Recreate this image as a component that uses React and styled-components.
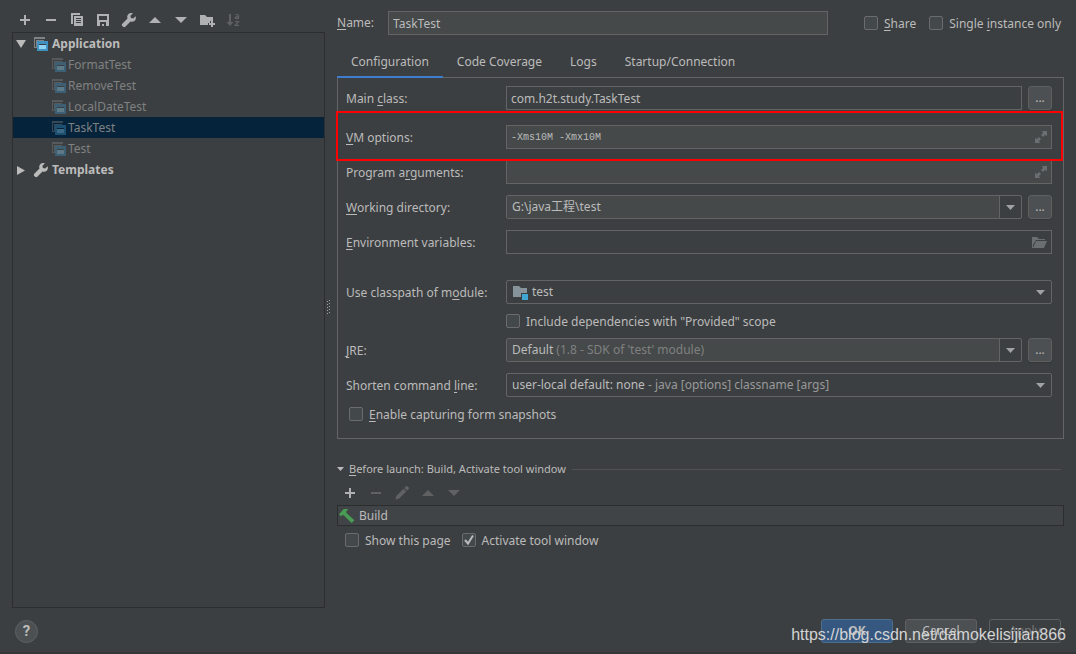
import { useState } from 'react'
import styled, { createGlobalStyle, css } from 'styled-components'

const GlobalStyle = createGlobalStyle`
  *, *::before, *::after {
    box-sizing: border-box;
  }
  body {
    margin: 0;
    background: #3c3f41;
    color: #bbbbbb;
    font-family: 'Noto Sans', 'Noto Sans CJK SC', sans-serif;
    font-size: 12px;
    line-height: 20px;
  }
  button, input, select {
    margin: 0;
    padding: 0;
    color: inherit;
    font: inherit;
  }
  u {
    text-underline-offset: 2px;
    text-decoration-thickness: 1px;
    text-decoration-skip-ink: none;
  }
`

const Dialog = styled.div`
  position: relative;
  display: flex;
  flex-direction: column;
  min-height: 100vh;
  border-bottom: 2px solid #343638;
`

const Body = styled.main`
  flex: 1;
  display: flex;
  padding: 0 12px;
`

const Sidebar = styled.aside`
  flex: none;
  width: 313px;
  display: flex;
  flex-direction: column;
`

const Toolbar = styled.div`
  display: flex;
  gap: 10px;
  padding: ${p => p.$pad};
`

const IconButton = styled.button`
  display: flex;
  width: 16px;
  height: 16px;
  border: 0;
  background: none;
  color: #afb1b3;
  &:disabled {
    color: #5f6163;
  }
`

const Tree = styled.ul`
  flex: 1;
  margin: 0;
  padding: 0;
  border: 1px solid #2b2d2e;
  list-style: none;
`

const TreeItem = styled.li`
  display: flex;
  align-items: center;
  height: 21px;
  padding-left: ${p => (p.$child ? '38px' : '2px')};
  color: ${p => (p.$child ? '#7f8182' : '#bbbbbb')};
  font-weight: ${p => (p.$child ? 'normal' : 'bold')};
  background: ${p => (p.$selected ? '#05233b' : 'transparent')};
  white-space: pre;
  & > svg:last-of-type {
    opacity: ${p => (p.$child ? 0.4 : 1)};
    margin-right: ${p => (p.$child ? '1px' : '3px')};
  }
  & > svg:first-of-type:not(:last-of-type) {
    margin-right: 2px;
  }
`

const Splitter = styled.div`
  flex: none;
  width: 12px;
  display: flex;
  align-items: center;
  padding: 8px 0 0 1px;
`

const Content = styled.section`
  flex: 1;
  min-width: 0;
  padding-top: 11px;
`

const NameRow = styled.div`
  display: flex;
  align-items: center;
  padding-right: 3px;
  white-space: nowrap;
  & > label:first-child {
    width: 51px;
  }
  & > input {
    flex: 1;
    min-width: 0;
    margin-right: 36px;
  }
`

const Field = styled.input`
  width: 100%;
  height: 24px;
  padding: 0 4px;
  border: 1px solid #646464;
  border-radius: 0;
  background: ${p => (p.$plain ? 'transparent' : '#45494a')};
  outline: none;
  ${p =>
    p.$mono &&
    css`
      font-family: 'Liberation Mono', monospace;
      font-size: 10px;
    `}
`

const CheckLabel = styled.label`
  display: inline-flex;
  align-items: center;
  gap: 6px;
  height: 24px;
  margin-left: ${p => p.$indent || '0'};
  margin-right: ${p => p.$space || '0'};
  white-space: nowrap;
  & > span:last-child {
    padding-top: 2px;
  }
`

const CheckBox = styled.span`
  display: grid;
  width: 14px;
  height: 14px;
  & > * {
    grid-area: 1 / 1;
  }
  & > svg {
    pointer-events: none;
  }
`

const CheckInput = styled.input`
  appearance: none;
  width: 14px;
  height: 14px;
  border: 1px solid #6b6b6b;
  border-radius: 2px;
  background: #43494a;
`

const Tabs = styled.div`
  position: relative;
  display: flex;
  height: 33px;
  margin: 10px 0 -1px;
`

const Tab = styled.button`
  padding: 2px 14px 0;
  border: 0;
  border-bottom: 2px solid ${p => (p.$active ? '#3d7dcc' : 'transparent')};
  background: none;
`

const Panel = styled.div`
  padding: 8px 11px 12px 8px;
  border: 1px solid #646464;
`

const Row = styled.div`
  position: relative;
  display: grid;
  grid-template-columns: 160px 1fr auto;
  align-items: center;
  margin-top: ${p => p.$space || '11px'};
  white-space: nowrap;
  & > label[for] {
    padding-top: 2px;
  }
`

const Highlight = styled.div`
  position: absolute;
  inset: -14px -11px -12px -10px;
  border: 2px solid #ff0000;
  pointer-events: none;
  z-index: 1;
`

const Control = styled.div`
  display: grid;
  grid-template-columns: 1fr auto;
  align-items: center;
  & > input {
    grid-area: 1 / 1 / 2 / 3;
  }
  & > button {
    grid-area: 1 / 2;
    margin-right: 4px;
    color: #6b6e70;
  }
`

const Combo = styled.div`
  display: grid;
  grid-template-columns: 1fr 22px;
  height: 24px;
  border: 1px solid #646464;
  border-radius: 2px;
  overflow: hidden;
  & > select {
    grid-area: 1 / 1 / 2 / 3;
    appearance: none;
    border: 0;
    background: transparent;
    color: transparent;
    outline: none;
  }
  & > select option {
    background: #3c3f41;
    color: #bbbbbb;
  }
`

const ComboValue = styled.div`
  grid-area: 1 / 1;
  display: flex;
  align-items: center;
  padding-left: 5px;
  background: ${p => (p.$editable ? '#45494a' : 'transparent')};
  pointer-events: none;
  white-space: pre;
  line-height: 22px;
  & > svg {
    margin-right: 4px;
  }
`

const Hint = styled.span`
  color: ${p => (p.$dim ? '#808080' : '#999999')};
`

const ComboArrow = styled.div`
  grid-area: 1 / 2;
  display: grid;
  place-items: center;
  border-left: 1px solid ${p => (p.$editable ? '#646464' : 'transparent')};
  color: #a0a2a4;
  pointer-events: none;
`

const MoreButton = styled.button`
  width: 24px;
  height: 24px;
  margin-left: 6px;
  border: 1px solid #5e6060;
  border-radius: 3px;
  background: #4c5052;
  box-shadow: 0 1px 1px #353739;
  line-height: 20px;
`

const LaunchTitle = styled.h2`
  display: flex;
  align-items: center;
  gap: 4px;
  height: 20px;
  margin: 20px 0 0;
  padding-right: 3px;
  font-size: 11px;
  font-weight: normal;
  white-space: nowrap;
  &::after {
    content: '';
    flex: 1;
    height: 1px;
    margin-left: 2px;
    background: #515151;
  }
`

const TaskList = styled.ul`
  margin: 0 0 2px;
  padding: 0;
  border: 1px solid #2b2d2e;
  background: #414446;
  list-style: none;
`

const Task = styled.li`
  display: flex;
  align-items: center;
  gap: 4px;
  height: 19px;
  padding-left: 1px;
`

const LaunchChecks = styled.div`
  padding-left: 8px;
`

const Footer = styled.footer`
  flex: none;
  display: flex;
  align-items: center;
  gap: 12px;
  height: 44px;
  padding: 2px 15px 0;
`

const HelpButton = styled.button`
  width: 23px;
  height: 23px;
  margin-right: auto;
  border: 1px solid #5e6264;
  border-radius: 50%;
  background: #4c5052;
  font-family: Roboto, sans-serif;
  font-size: 15px;
  font-weight: bold;
  line-height: 20px;
`

const DialogButton = styled.button`
  width: 72px;
  height: 24px;
  border: 1px solid #5e6060;
  border-radius: 3px;
  background: #4c5052;
  line-height: 20px;
  ${p =>
    p.$primary &&
    css`
      border-color: #4c708c;
      background: #365880;
      font-weight: bold;
    `}
  &:disabled {
    background: transparent;
    color: #777777;
  }
`

const Watermark = styled.div`
  position: absolute;
  right: 10px;
  bottom: 7px;
  color: #d3d4d4;
  font-family: 'Liberation Sans', Arial, sans-serif;
  font-size: 16px;
  line-height: 20px;
  pointer-events: none;
`

const IconSvg = styled.svg`
  flex: none;
`

const Svg = ({ size = 16, children }) => (
  <IconSvg
    width={size}
    height={size}
    viewBox={`0 0 ${size} ${size}`}
    fill="currentColor"
    aria-hidden="true"
  >
    {children}
  </IconSvg>
)

const icons = {
  add: <path d="M7 3h2v4h4v2H9v4H7V9H3V7h4z" />,
  remove: <path d="M3 7h10v2H3z" />,
  copy: (
    <>
      <path d="M2 1h9v2H4v9H2z" />
      <path d="M5 4h9v10H5zM7 6v1h5V6zM7 8v1h5V8zM7 10v1h5v-1z" fillRule="evenodd" />
    </>
  ),
  save: (
    <path d="M2 2h12v12H2zM4 4v4h8V4zM5 10v4h2v-2h2v2h2v-4z" fillRule="evenodd" />
  ),
  wrench: (
    <path d="M14.6 4.2 12.2 6.6 9.9 6.1 9.4 3.8 11.8 1.4C10.2.8 8.4 1.1 7.3 2.3 6.2 3.4 5.9 5.1 6.5 6.5L1.3 11.7C.7 12.3.7 13.3 1.3 13.9L2.1 14.7C2.7 15.3 3.7 15.3 4.3 14.7L9.5 9.5C10.9 10.1 12.6 9.8 13.7 8.7 14.9 7.5 15.2 5.7 14.6 4.2Z" />
  ),
  up: <path d="M8 5 14 11H2z" />,
  down: <path d="M2 5h12L8 11z" />,
  folder: (
    <path d="M1 3h5l2 2h6v4h-3v2H9v2H1zM12 9h2v2h2v2h-2v2h-2v-2h-2v-2h2z" />
  ),
  sort: (
    <>
      <path d="M4 2h2v8h2.5L5 14 1.5 10H4z" />
      <path
        d="M10.5 3.2c.8-1 3-1 3 .6V7M13.5 4.7c-3-.2-3.4.6-3.2 1.3.3 1 2.5 1 3.2-.4M10 9.5h3.5L10.2 13.3H14"
        fill="none"
        stroke="currentColor"
        strokeWidth="1.2"
      />
    </>
  ),
  edit: (
    <path d="M1.5 14.5 2.3 11 9.5 3.8 12.2 6.5 5 13.7zM10.3 3 12 1.3c.4-.4 1-.4 1.4 0l1.3 1.3c.4.4.4 1 0 1.4L13 5.7z" />
  ),
  expand: (
    <path d="M10 2h5v5l-2-1-2 2-2-2 2-2zM3 9v5h5l-1-2 2-2-2-2-2 2z" />
  ),
  open: <path d="M0 3h5l2 2h6v1H4L1 11v3H0zM4 7h11l-3 7H1z" />,
}

const Icon = ({ name }) => <Svg>{icons[name]}</Svg>

const AppIcon = () => (
  <Svg>
    <path d="M1 1h11v2H1zM1 3h1v8H1zM1 11h3v1H1zM3 4h8v1H4v6H3z" fill="#7f8385" />
    <path d="M4 5h11v10H4zM6 8v5h7V8z" fill="#3f91c1" fillRule="evenodd" />
    <path d="M6 9h7v4H6z" fill="#8fd3f5" />
  </Svg>
)

const ModuleIcon = () => (
  <Svg>
    <path d="M1 2h6l2 2h6v5H9v4H1z" fill="#87939a" />
    <path d="M10 10h6v6h-6z" fill="#40a7d4" />
  </Svg>
)

const HammerIcon = () => (
  <Svg>
    <path
      d="M0 6.3 4.8 1h4.4L7.2 3.7 7.7 5.2 15.4 12.3 12.6 15 5.2 7.8 3.8 6.8 2 8.3z"
      fill="#499c54"
    />
  </Svg>
)

const ComboTriangle = () => (
  <svg width="10" height="6" viewBox="0 0 10 6" fill="currentColor" aria-hidden="true">
    <path d="M0 1h9L4.5 6z" />
  </svg>
)

const Checkbox = ({ children, indent, space, defaultChecked = false }) => {
  const [checked, setChecked] = useState(defaultChecked)

  return (
    <CheckLabel $indent={indent} $space={space}>
      <CheckBox>
        <CheckInput
          type="checkbox"
          checked={checked}
          onChange={e => setChecked(e.target.checked)}
        />
        {checked && (
          <Svg size={14}>
            <path d="M3 7 6 10.5 11 2.5" fill="none" stroke="#bbbbbb" strokeWidth="2" />
          </Svg>
        )}
      </CheckBox>
      <span>{children}</span>
    </CheckLabel>
  )
}

const ComboBox = ({ id, value, hint, editable, icon }) => (
  <Combo>
    <ComboValue $editable={editable} aria-hidden="true">
      {icon}
      {value}
      {hint && <Hint $dim={editable}>{hint}</Hint>}
    </ComboValue>
    <ComboArrow $editable={editable}>
      <ComboTriangle />
    </ComboArrow>
    <select id={id} defaultValue={value}>
      <option value={value}>{value}</option>
    </select>
  </Combo>
)

const toolbar = [
  ['add', 'Add'],
  ['remove', 'Remove'],
  ['copy', 'Copy'],
  ['save', 'Save'],
  ['wrench', 'Edit templates'],
  ['up', 'Move up'],
  ['down', 'Move down'],
  ['folder', 'Create folder'],
  ['sort', 'Sort', true],
]

const launchToolbar = [
  ['add', 'Add task'],
  ['remove', 'Remove task', true],
  ['edit', 'Edit task', true],
  ['up', 'Move task up', true],
  ['down', 'Move task down', true],
]

const configs = ['FormatTest', 'RemoveTest', 'LocalDateTest', 'TaskTest', 'Test']
const tabs = ['Configuration', 'Code Coverage', 'Logs', 'Startup/Connection']

const Actions = ({ items, pad }) => (
  <Toolbar $pad={pad}>
    {items.map(([icon, label, disabled]) => (
      <IconButton key={icon} type="button" aria-label={label} disabled={disabled}>
        <Icon name={icon} />
      </IconButton>
    ))}
  </Toolbar>
)

const App = () => {
  const [selected, setSelected] = useState('TaskTest')
  const [tab, setTab] = useState('Configuration')

  return (
    <Dialog>
      <GlobalStyle />
      <Body>
        <Sidebar>
          <Actions items={toolbar} pad="12px 5px 4px" />
          <Tree>
            <TreeItem>
              <Svg>
                <path d="M1 4h10L6 12z" />
              </Svg>
              <AppIcon />
              Application
            </TreeItem>
            {configs.map(name => (
              <TreeItem
                key={name}
                $child
                $selected={name === selected}
                onClick={() => setSelected(name)}
              >
                <AppIcon />
                {name}
              </TreeItem>
            ))}
            <TreeItem>
              <Svg>
                <path d="M2 4v9l8-4.5z" />
              </Svg>
              <Icon name="wrench" />
              Templates
            </TreeItem>
          </Tree>
        </Sidebar>

        <Splitter>
          <svg width="4" height="16" viewBox="0 0 4 16" aria-hidden="true">
            <path
              d="M1 1v14M3 0v15"
              stroke="#a0a2a4"
              strokeWidth="1"
              strokeDasharray="1 2"
              shapeRendering="crispEdges"
            />
          </svg>
        </Splitter>

        <Content>
          <NameRow>
            <label htmlFor="name">
              <u>N</u>ame:
            </label>
            <Field id="name" defaultValue="TaskTest" />
            <Checkbox space="13px">
              <u>S</u>hare
            </Checkbox>
            <Checkbox>
              Single <u>i</u>nstance only
            </Checkbox>
          </NameRow>

          <Tabs role="tablist">
            {tabs.map(t => (
              <Tab
                key={t}
                type="button"
                role="tab"
                aria-selected={t === tab}
                $active={t === tab}
                onClick={() => setTab(t)}
              >
                {t}
              </Tab>
            ))}
          </Tabs>

          <Panel>
            <Row $space="0">
              <label htmlFor="main">
                Main <u>c</u>lass:
              </label>
              <Field id="main" $plain defaultValue="com.h2t.study.TaskTest" />
              <MoreButton type="button">...</MoreButton>
            </Row>
            <Row $space="15px">
              <label htmlFor="vm">
                <u>V</u>M options:
              </label>
              <Control>
                <Field id="vm" $mono defaultValue="-Xms10M -Xmx10M" />
                <IconButton type="button" aria-label="Expand VM options">
                  <Icon name="expand" />
                </IconButton>
              </Control>
              <Highlight />
            </Row>
            <Row>
              <label htmlFor="args">
                Program a<u>r</u>guments:
              </label>
              <Control>
                <Field id="args" $mono />
                <IconButton type="button" aria-label="Expand program arguments">
                  <Icon name="expand" />
                </IconButton>
              </Control>
            </Row>
            <Row>
              <label htmlFor="dir">
                <u>W</u>orking directory:
              </label>
              <ComboBox id="dir" editable value="G:\java工程\test" />
              <MoreButton type="button">...</MoreButton>
            </Row>
            <Row>
              <label htmlFor="env">
                <u>E</u>nvironment variables:
              </label>
              <Control>
                <Field id="env" $plain />
                <IconButton type="button" aria-label="Edit environment variables">
                  <Icon name="open" />
                </IconButton>
              </Control>
            </Row>
            <Row $space="26px">
              <label htmlFor="module">
                Use classpath of m<u>o</u>dule:
              </label>
              <ComboBox id="module" value="test" icon={<ModuleIcon />} />
            </Row>
            <Row $space="5px">
              <span />
              <Checkbox>Include dependencies with "Provided" scope</Checkbox>
            </Row>
            <Row $space="5px">
              <label htmlFor="jre">
                <u>J</u>RE:
              </label>
              <ComboBox
                id="jre"
                editable
                value="Default"
                hint=" (1.8 - SDK of 'test' module)"
              />
              <MoreButton type="button">...</MoreButton>
            </Row>
            <Row>
              <label htmlFor="shorten">
                Shorten command <u>l</u>ine:
              </label>
              <ComboBox
                id="shorten"
                value="user-local default: none"
                hint=" - java [options] classname [args]"
              />
            </Row>
            <Row $space="5px">
              <Checkbox indent="3px">
                <u>E</u>nable capturing form snapshots
              </Checkbox>
            </Row>
          </Panel>

          <LaunchTitle>
            <svg width="8" height="6" viewBox="0 0 8 6" fill="currentColor" aria-hidden="true">
              <path d="M0 1h7L3.5 5z" />
            </svg>
            <span>
              <u>B</u>efore launch: Build, Activate tool window
            </span>
          </LaunchTitle>
          <Actions items={launchToolbar} pad="6px 5px 4px" />
          <TaskList>
            <Task>
              <HammerIcon />
              Build
            </Task>
          </TaskList>
          <LaunchChecks>
            <Checkbox space="11px">Show this page</Checkbox>
            <Checkbox defaultChecked>Activate tool window</Checkbox>
          </LaunchChecks>
        </Content>
      </Body>

      <Footer>
        <HelpButton type="button" aria-label="Help">
          ?
        </HelpButton>
        <DialogButton type="button" $primary>
          OK
        </DialogButton>
        <DialogButton type="button">Cancel</DialogButton>
        <DialogButton type="button" disabled>
          Apply
        </DialogButton>
      </Footer>
      <Watermark>https://blog.csdn.net/damokelisijian866</Watermark>
    </Dialog>
  )
}

export default App
